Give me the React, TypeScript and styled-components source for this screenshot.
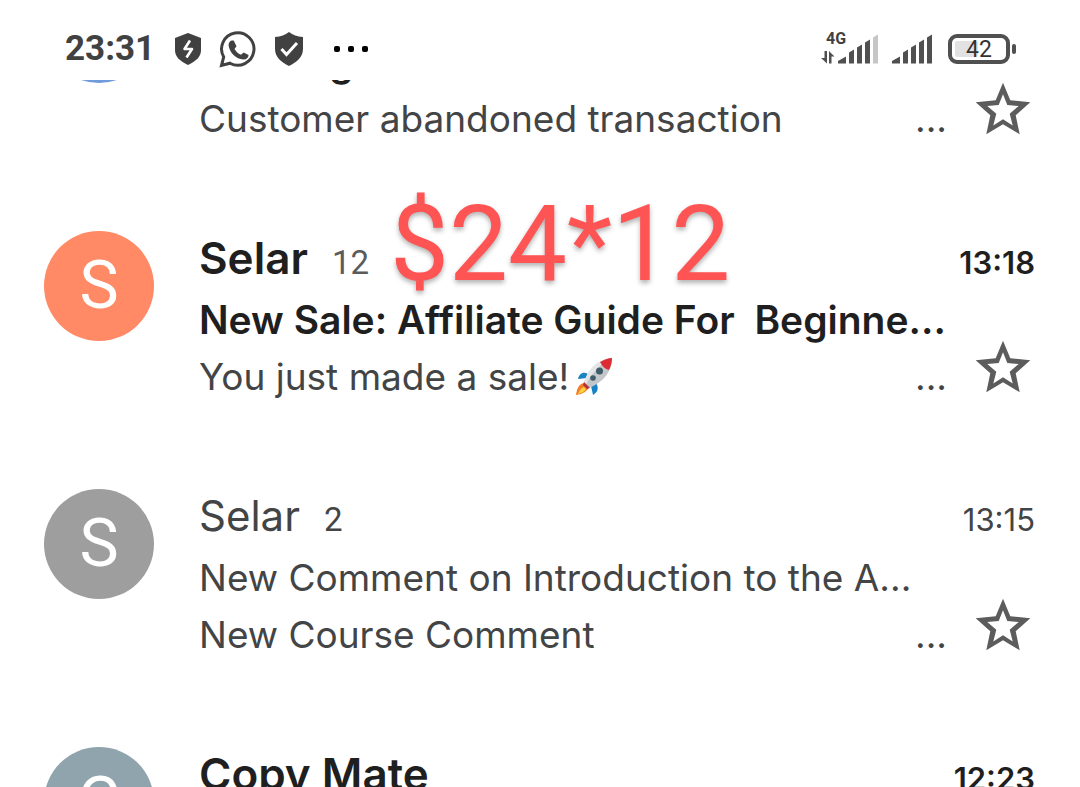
import React from "react";
import styled, { createGlobalStyle } from "styled-components";

const GlobalStyle = createGlobalStyle`
  * { box-sizing: border-box; }
  html, body, #root { height: 100%; }
  body {
    margin: 0;
    background: #fff;
    color: #434445;
    font-family: Inter, Roboto, sans-serif;
    overflow: hidden;
  }
`;

const Page = styled.div`
  display: flex;
  flex-direction: column;
  height: 100vh;
`;

const StatusBar = styled.header`
  display: flex;
  flex: none;
  align-items: center;
  justify-content: space-between;
  height: 80px;
  padding: 18px 63px 0 65px;
  color: #414141;
  font-family: Roboto, sans-serif;
`;

const StatusGroup = styled.div<{ $gap: number }>`
  display: flex;
  align-items: center;
  gap: ${(p) => p.$gap}px;
`;

const Clock = styled.time`
  font-size: 35px;
  font-weight: 700;
  line-height: 40px;
  margin-right: 2px;
`;

const MoreDots = styled.svg`
  margin-left: 12px;
`;

const Inbox = styled.main`
  flex: 1;
  min-height: 0;
  overflow: hidden;
`;

const MailList = styled.ul`
  list-style: none;
  margin: -134px 0 0;
  padding: 0;
`;

const MailRow = styled.li`
  position: relative;
  display: flex;
  gap: 45px;
  height: 258px;
  padding: 24px 45px 0 44px;
`;

const Avatar = styled.div<{ $color: string }>`
  flex: none;
  width: 110px;
  height: 110px;
  margin-top: 3px;
  border-radius: 50%;
  background: ${(p) => p.$color};
  color: #fff;
  font-family: Roboto, sans-serif;
  font-size: 66px;
  font-weight: 400;
  line-height: 110px;
  text-align: center;
`;

const MailBody = styled.div`
  flex: 1;
  min-width: 0;
`;

const MailHead = styled.div<{ $unread: boolean }>`
  display: flex;
  align-items: baseline;
  height: 63px;
  line-height: 60px;
  font-weight: ${(p) => (p.$unread ? 600 : 400)};
  color: ${(p) => (p.$unread ? "#1f1f1f" : "#434445")};
`;

const Sender = styled.span<{ $unread: boolean }>`
  font-size: ${(p) => (p.$unread ? 44 : 42)}px;
`;

const Count = styled.span<{ $muted: boolean }>`
  margin-left: 24px;
  font-family: Roboto, sans-serif;
  font-size: 33px;
  font-weight: 400;
  color: ${(p) => (p.$muted ? "#5a5b5c" : "#434445")};
`;

const Time = styled.time`
  margin-left: auto;
  font-size: 31px;
`;

const MailContent = styled.div`
  display: flex;
  align-items: flex-end;
  gap: 24px;
`;

const Lines = styled.div`
  flex: 1;
  min-width: 0;
  font-size: 37px;
  line-height: 57px;
  white-space: pre;
`;

const Subject = styled.div<{ $unread: boolean }>`
  height: 57px;
  font-size: ${(p) => (p.$unread ? 39 : 37)}px;
  font-weight: ${(p) => (p.$unread ? 600 : 400)};
  color: ${(p) => (p.$unread ? "#1f1f1f" : "#434445")};
`;

const Snippet = styled.div`
  display: flex;
  justify-content: space-between;
`;

const SnippetText = styled.span`
  display: flex;
  align-items: center;
  gap: 6px;
`;

const StarButton = styled.button`
  flex: none;
  width: 64px;
  height: 64px;
  margin: 0 0 5px;
  padding: 0;
  border: 0;
  background: none;
  color: #5c5c5c;
  svg { display: block; }
`;

const Annotation = styled.div`
  position: absolute;
  left: 390px;
  top: -21px;
  color: #ff5454;
  font-family: Roboto, sans-serif;
  font-size: 105px;
  line-height: 124px;
  text-shadow: 0 3px 5px rgba(0, 0, 0, 0.3);
  white-space: nowrap;
`;

const BoltShield = () => (
  <svg width="28" height="34" viewBox="0 0 28 34">
    <path d="M14 1 27 6v12c0 7-5 11-13 15C6 29 1 25 1 18V6Z" fill="#414141" />
    <path d="M16 8.500 10.500 17H18l-5.500 8.500" fill="none" stroke="#fff" strokeWidth="2.600" strokeLinejoin="round" />
  </svg>
);

const WhatsApp = () => (
  <svg width="38" height="38" viewBox="0 0 38 38">
    <path d="M2.500 35.500 4.700 27A16.200 16.200 0 1 1 11 33.200Z" fill="none" stroke="#414141" strokeWidth="3" />
    <path d="M12.500 10.500h2.200l2.800 5.800-2 2.800c1.600 2.700 3.600 4.500 6.400 5.700l2.700-2.400 5 2.700c-.2 3-2.500 4.700-5.200 4.500C17 29 10.500 22.500 9.600 15.500c-.2-2.200 1-4.200 2.900-5Z" fill="#414141" />
  </svg>
);

const CheckShield = () => (
  <svg width="30" height="34" viewBox="0 0 30 34">
    <path d="M15 0c4 3 8 4.500 14 5v12c0 8-6 13-14 17C7 30 1 25 1 17V5c6-.5 10-2 14-5Z" fill="#414141" />
    <path d="m7.500 17 5 5.500L23 11" fill="none" stroke="#fff" strokeWidth="3" />
  </svg>
);

const MobileSignal = () => (
  <svg width="57" height="34" viewBox="0 2 57 34" fill="#505050">
    <text x="5" y="14" fontSize="16" fontWeight="700" fontFamily="Roboto, sans-serif" fill="#414141">4G</text>
    <path d="M3.500 21H6v12.500L0 28h3.500ZM8 33.500V21l5.500 5.500h-3v7Z" />
    <path d="M17 33.500v-2.500l8-4.500v7Z" />
    <path d="m28 22.500 5-3v14h-5Z" />
    <path d="m36 17.500 5-3v19h-5Z" />
    <path d="m44 12.500 5-3v24h-5Z" />
    <path d="m52 7.500 5-3v29h-5Z" fill="#c6c6c6" />
  </svg>
);

const SimSignal = () => (
  <svg width="42" height="34" viewBox="0 2 42 34" fill="#505050">
    <path d="M0 33.500v-2.500l8-4.500v7Z" />
    <path d="m11 22.500 5-3v14h-5Z" />
    <path d="m19 17.500 5-3v19h-5Z" />
    <path d="m27 12.500 5-3v24h-5Z" />
    <path d="m35 7.500 5-3v29h-5Z" />
  </svg>
);

const Battery = () => (
  <svg width="69" height="32" viewBox="0 0 69 32">
    <rect x="2" y="3" width="58" height="26" rx="7" fill="#fff" stroke="#505050" strokeWidth="4" />
    <rect x="7" y="8" width="23" height="16" rx="2" fill="#e2e2e2" />
    <rect x="64" y="11" width="4" height="10" rx="2" fill="#505050" />
    <text x="31" y="24" textAnchor="middle" fontSize="23" fontWeight="400" fontFamily="Roboto, sans-serif" fill="#333">42</text>
  </svg>
);

const Rocket = () => (
  <svg width="38" height="40" viewBox="0 0 38 40">
    <path d="M13 17C8 14 4 17 3 22l9-1Zm8 9c3 5 2 9-3 12l-2-9Z" fill="#1783c4" />
    <path d="M10 26c-5 0-8 4-9 12 7-1 12-4 13-9Z" fill="#f47b28" />
    <path d="M9 30c-3 1-5 4-6 7 4-1 7-3 8-5Z" fill="#fbd23c" />
    <path d="M9 26C12 13 22 3 37 1c0 13-8 24-23 30Z" fill="#c3c7c9" />
    <path d="M9 26C12 13 22 3 34 2 24 9 15 18 11 28Z" fill="#e3e5e6" />
    <path d="M25 5c4-2 8-4 12-4 0 4-1 8-3 12-4-1-7-4-9-8Z" fill="#de2c35" />
    <circle cx="24.500" cy="14" r="3.500" fill="#3f5c6b" />
    <circle cx="18" cy="21" r="2.800" fill="#3f5c6b" />
    <path d="m9 25 6 6-3 1-4-4Z" fill="#b5303a" />
  </svg>
);

const Star = () => (
  <svg width="64" height="64" viewBox="0 0 64 64" fill="currentColor">
    <path
      fillRule="evenodd"
      d="M32 4.700 39.300 22.300 59.300 24.300 44.700 37.300 48.700 56.300 32 46.300 15.300 56.300 19.300 37.300 4.700 24.300 24.700 22.300ZM32 16.300 27.700 27 16.300 28 25.300 35.700 22.300 47.500 32 41.300 41.700 47.500 38.700 35.700 47.700 28 36.300 27Z"
    />
  </svg>
);

interface Mail {
  sender: string;
  color: string;
  count?: number;
  time: string;
  subject: string;
  snippet: string;
  rocket?: boolean;
  note?: string;
  unread: boolean;
}

const mails: Mail[] = [
  { sender: "Selar", color: "#6f9bdc", time: "13:20", subject: "Pending", snippet: "Customer abandoned transaction", unread: true },
  { sender: "Selar", color: "#ff8a65", count: 12, time: "13:18", subject: "New Sale: Affiliate Guide For  Beginne...", snippet: "You just made a sale!", rocket: true, note: "$24*12", unread: true },
  { sender: "Selar", color: "#9e9e9e", count: 2, time: "13:15", subject: "New Comment on Introduction to the A...", snippet: "New Course Comment", unread: false },
  { sender: "Copy Mate", color: "#90a4ae", time: "12:23", subject: "", snippet: "", unread: true },
];

export default function App() {
  return (
    <Page>
      <GlobalStyle />
      <StatusBar>
        <StatusGroup $gap={17}>
          <Clock>23:31</Clock>
          <BoltShield />
          <WhatsApp />
          <CheckShield />
          <MoreDots width="36" height="8" viewBox="0 0 36 8">
            <rect x="1" y="1" width="6" height="6" rx="2" />
            <rect x="15" y="1" width="6" height="6" rx="2" />
            <rect x="29" y="1" width="6" height="6" rx="2" />
          </MoreDots>
        </StatusGroup>
        <StatusGroup $gap={14}>
          <MobileSignal />
          <SimSignal />
          <Battery />
        </StatusGroup>
      </StatusBar>
      <Inbox>
        <MailList>
          {mails.map((m, i) => (
            <MailRow key={i}>
              <Avatar $color={m.color}>{m.sender[0]}</Avatar>
              <MailBody>
                <MailHead $unread={m.unread}>
                  <Sender $unread={m.unread}>{m.sender}</Sender>
                  {m.count && <Count $muted={m.unread}>{m.count}</Count>}
                  <Time>{m.time}</Time>
                </MailHead>
                {m.subject && (
                  <MailContent>
                    <Lines>
                      <Subject $unread={m.unread}>{m.subject}</Subject>
                      <Snippet>
                        <SnippetText>
                          {m.snippet}
                          {m.rocket && <Rocket />}
                        </SnippetText>
                        <span>...</span>
                      </Snippet>
                    </Lines>
                    <StarButton type="button" aria-label="Star">
                      <Star />
                    </StarButton>
                  </MailContent>
                )}
              </MailBody>
              {m.note && <Annotation>{m.note}</Annotation>}
            </MailRow>
          ))}
        </MailList>
      </Inbox>
    </Page>
  );
}
